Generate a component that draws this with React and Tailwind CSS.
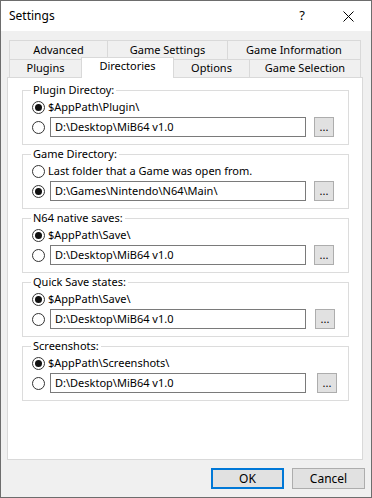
import React from "react";

const Radio = ({ checked }) => (
  <span className="flex h-[13px] w-[13px] shrink-0 items-center justify-center rounded-full border border-[#333] bg-white">
    {checked && <span className="h-[7px] w-[7px] rounded-full bg-[#111]" />}
  </span>
);

const Group = ({ title, option, path, pick, btnGap }) => (
  <fieldset className="w-[327px] shrink-0 border border-[#dcdcdc] pb-[7px]">
    <legend className="ml-[8px] px-[2px] leading-[14px]">{title}</legend>
    <div className="flex h-[20px] items-center pl-[9px]">
      <Radio checked={pick === 0} />
      <span className="ml-[3px] leading-[20px]">{option}</span>
    </div>
    <div className="flex h-[20px] items-center pl-[9px]">
      <Radio checked={pick === 1} />
      <div className="ml-[5px] flex h-[20px] w-[256px] items-center border border-[#7a7a7a] bg-white pl-[4px]">
        {path}
      </div>
      <button className={`${btnGap} flex h-[20px] w-[20px] items-center justify-center border border-[#adadad] bg-[#e1e1e1] pb-[2px] text-[11px] leading-none`}>
        ...
      </button>
    </div>
  </fieldset>
);

const groups = [
  { title: "Plugin Directoy:", option: "$AppPath\\Plugin\\", path: "D:\\Desktop\\MiB64 v1.0", pick: 0, btnGap: "ml-[8px]" },
  { title: "Game Directory:", option: "Last folder that a Game was open from.", path: "D:\\Games\\Nintendo\\N64\\Main\\", pick: 1, btnGap: "ml-[8px]" },
  { title: "N64 native saves:", option: "$AppPath\\Save\\", path: "D:\\Desktop\\MiB64 v1.0", pick: 0, btnGap: "ml-[8px]" },
  { title: "Quick Save states:", option: "$AppPath\\Save\\", path: "D:\\Desktop\\MiB64 v1.0", pick: 0, btnGap: "ml-[9px]" },
  { title: "Screenshots:", option: "$AppPath\\Screenshots\\", path: "D:\\Desktop\\MiB64 v1.0", pick: 0, btnGap: "ml-[11px]" },
];

const App = () => {
  return (
    <div className="h-[498px] w-[372px] border border-[#6d6d6d] bg-[#f0f0f0] font-['Noto_Sans',sans-serif] text-[11px] text-black">
      {/* Title bar */}
      <div className="flex h-[30px] items-center bg-white">
        <span className="flex-1 pl-[8px] text-[12px]">Settings</span>
        <div className="flex h-[30px] w-[46px] items-center justify-center text-[13px]">?</div>
        <div className="flex h-[30px] w-[46px] items-center justify-center">
          <svg width="11" height="11" viewBox="0 0 11 11">
            <path d="M0.5 0.5 L10.5 10.5 M10.5 0.5 L0.5 10.5" stroke="#000" strokeWidth="1" />
          </svg>
        </div>
      </div>

      <div className="pl-[6px] pt-[9px]">
        {/* Tabs */}
        <div className="mx-[2px] w-[352px]">
          <div className="flex h-[19px]">
            <div className="flex w-[98px] items-center justify-center border-l border-t border-[#d9d9d9]">Advanced</div>
            <div className="flex w-[120px] items-center justify-center border-l border-t border-[#d9d9d9]">Game Settings</div>
            <div className="flex w-[134px] items-center justify-center border-x border-t border-[#d9d9d9]">Game Information</div>
          </div>
          <div className="flex h-[18px] items-end">
            <div className="flex h-[18px] w-[72px] items-center justify-center border-l border-t border-[#d9d9d9]">Plugins</div>
            <div className="relative z-10 -mb-[1px] flex h-[21px] w-[93px] items-center justify-center border-x border-t border-[#d9d9d9] bg-white pb-[3px]">Directories</div>
            <div className="flex h-[18px] w-[75px] items-center justify-center border-t border-[#d9d9d9]">Options</div>
            <div className="flex h-[18px] w-[112px] items-center justify-center border-x border-t border-[#d9d9d9]">Game Selection</div>
          </div>
        </div>

        {/* Panel */}
        <div className="flex h-[383px] w-[356px] flex-col gap-[2px] border border-[#d9d9d9] bg-white pl-[14px] pt-[5px]">
          {groups.map((g) => (
            <Group key={g.title} {...g} />
          ))}
        </div>

        {/* Buttons */}
        <div className="mt-[8px] flex justify-end gap-[8px] pr-[6px]">
          <button className="h-[21px] w-[73px] border-2 border-[#0078d7] bg-[#e1e1e1] text-[12px]">OK</button>
          <button className="h-[21px] w-[73px] border border-[#adadad] bg-[#e1e1e1] text-[12px]">Cancel</button>
        </div>
      </div>
    </div>
  );
};

export default App;
